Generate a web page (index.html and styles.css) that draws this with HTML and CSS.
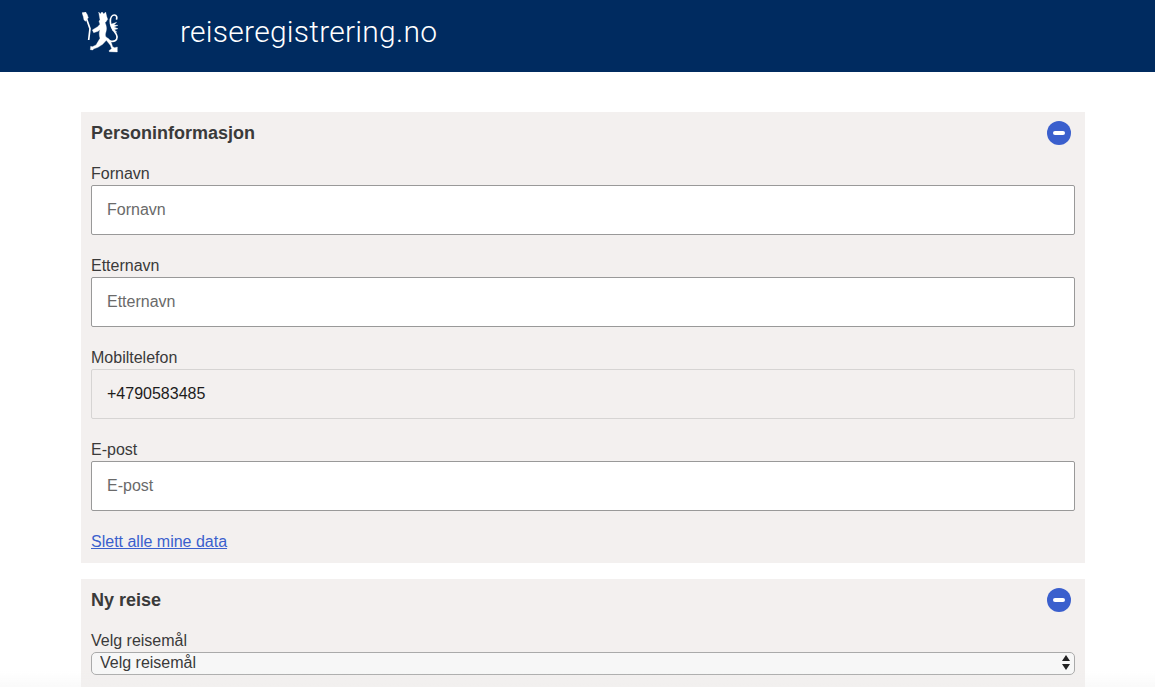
FILE: index.html
```html
<!DOCTYPE html>
<html lang="en">
<head>
    <meta charset="UTF-8">
    <meta name="viewport" content="width=device-width, initial-scale=1.0">
    <title>reiseregistrering.no</title>
    <link rel="stylesheet" href="styles.css">
</head>
<body>
    <header class="site-header">
        <svg class="logo" viewBox="66 36 108 132" aria-hidden="true">
            <!-- axe -->
            <path class="logo-fill" d="M66 38l11-2 5 8 3 10-5 3-3 7-5-4-2-10z"/>
            <path class="logo-line" d="M78 52l12 34-4 34"/>
            <!-- crown and lion -->
            <path class="logo-fill" d="M116 36l5 6 5-7 5 7 6-6 3 13 3 9-5 7-3 3c4 8 6 17 3 27-2 6-3 11 0 16l9 6 6 8 5 15 6 3 8-2v15l-24-1-1-3 8-6-4-10-12-15-11 12-14 9-14 5-1 3-8-1 1-10 5 1 11-5 12-20c-3-10-3-18 0-26l-6 5-13 4-4-8 16-10 7-7-3-9 3-5z"/>
            <!-- tail -->
            <path class="logo-tail" d="M148 122c14 5 24 0 23-12-1-14-20-20-20-46 0-12 6-19 12-19 7 0 9 8 6 14"/>
            <path class="logo-fill" d="M152 73l18-6-8 8 12 1-12 5 12 5-11 3 8 8-13-5z"/>
        </svg>
        <span class="site-title">reiseregistrering.no</span>
    </header>

    <main class="content">
        <section class="panel">
            <div class="panel-head">
                <h2>Personinformasjon</h2>
                <button class="toggle" aria-label="Skjul"><span></span></button>
            </div>
            <div class="field">
                <label for="fornavn">Fornavn</label>
                <input id="fornavn" type="text" placeholder="Fornavn">
            </div>
            <div class="field">
                <label for="etternavn">Etternavn</label>
                <input id="etternavn" type="text" placeholder="Etternavn">
            </div>
            <div class="field">
                <label for="mobil">Mobiltelefon</label>
                <input id="mobil" type="text" value="+4790583485" disabled>
            </div>
            <div class="field">
                <label for="epost">E-post</label>
                <input id="epost" type="text" placeholder="E-post">
            </div>
            <a class="delete-link" href="#">Slett alle mine data</a>
        </section>

        <section class="panel">
            <div class="panel-head">
                <h2>Ny reise</h2>
                <button class="toggle" aria-label="Skjul"><span></span></button>
            </div>
            <label class="select-label" for="reisemal">Velg reisemål</label>
            <div class="select-wrap">
                <select id="reisemal">
                    <option>Velg reisemål</option>
                </select>
                <svg class="select-arrows" viewBox="0 0 8 15" aria-hidden="true">
                    <path d="M4 0l4 6H0zM0 9h8l-4 6z"/>
                </svg>
            </div>
        </section>
    </main>

    <div class="bottom-fade"></div>
</body>
</html>
```

FILE: styles.css
```css
body {
    font-family: "Liberation Sans", Arial, sans-serif;
    font-size: 16px;
    margin: 0;
    height: 687px;
    overflow: hidden;
    background-color: #fff;
    color: #3a3a3a;
}
.site-header {
    height: 72px;
    background-color: #002b60;
    display: flex;
    align-items: center;
    padding-left: 82px;
}
.logo {
    width: 36px;
    height: 44px;
    margin-right: 62px;
    margin-top: -4px;
}
.logo-fill {
    fill: #fff;
    stroke: #fff;
    stroke-width: 1;
}
.logo-line,
.logo-tail {
    fill: none;
    stroke: #fff;
}
.logo-line {
    stroke-width: 5;
}
.logo-tail {
    stroke-width: 5;
}
.site-title {
    font-family: Roboto, "Liberation Sans", sans-serif;
    font-weight: 300;
    font-size: 30px;
    letter-spacing: 0.25px;
    color: #fff;
    position: relative;
    top: -5px;
}
.content {
    width: 1004px;
    margin: 40px 0 0 81px;
}
.panel {
    background-color: #f3f0ef;
    padding: 0 10px;
    margin-bottom: 16px;
    height: 451px;
    box-sizing: border-box;
}
.panel + .panel {
    height: 120px;
}
.panel-head {
    height: 42px;
    margin-bottom: 10px;
    display: flex;
    align-items: center;
    justify-content: space-between;
}
.panel-head h2 {
    font-size: 18px;
    font-weight: bold;
    margin: 0;
}
.toggle {
    width: 24px;
    height: 24px;
    margin-right: 4px;
    padding: 0;
    border: none;
    border-radius: 50%;
    background-color: #3a5fcd;
    display: flex;
    align-items: center;
    justify-content: center;
}
.toggle span {
    width: 12px;
    height: 4px;
    border-radius: 2px;
    background-color: #fff;
}
.field {
    margin-bottom: 21px;
}
.field label,
.select-label {
    display: block;
    line-height: 19px;
    padding-bottom: 2px;
}
.field input {
    display: block;
    width: 100%;
    height: 50px;
    box-sizing: border-box;
    padding: 0 15px;
    border: 1px solid #999;
    border-radius: 2px;
    background-color: #fff;
    font-family: inherit;
    font-size: 16px;
    color: #1c1c1c;
}
.field input::placeholder {
    color: #6a6a6a;
    opacity: 1;
}
.field input:disabled {
    background-color: #f3f0ef;
    border-color: #d6d4d3;
    color: #1c1c1c;
}
.delete-link {
    color: #3a5fcd;
    line-height: 20px;
}
.select-wrap {
    position: relative;
}
.select-wrap select {
    display: block;
    width: 100%;
    height: 23px;
    padding: 0 8px 2px;
    appearance: none;
    border: 1px solid #aaa;
    border-radius: 5px;
    background-color: #f7f7f7;
    font-family: inherit;
    font-size: 16px;
    color: #3a3a3a;
}
.select-arrows {
    position: absolute;
    right: 5px;
    top: 3px;
    width: 8px;
    height: 15px;
    fill: #222;
}
.bottom-fade {
    position: fixed;
    left: 0;
    right: 0;
    bottom: 0;
    height: 16px;
    background: linear-gradient(rgba(240, 240, 240, 0), rgba(240, 240, 240, 0.35));
}
```
